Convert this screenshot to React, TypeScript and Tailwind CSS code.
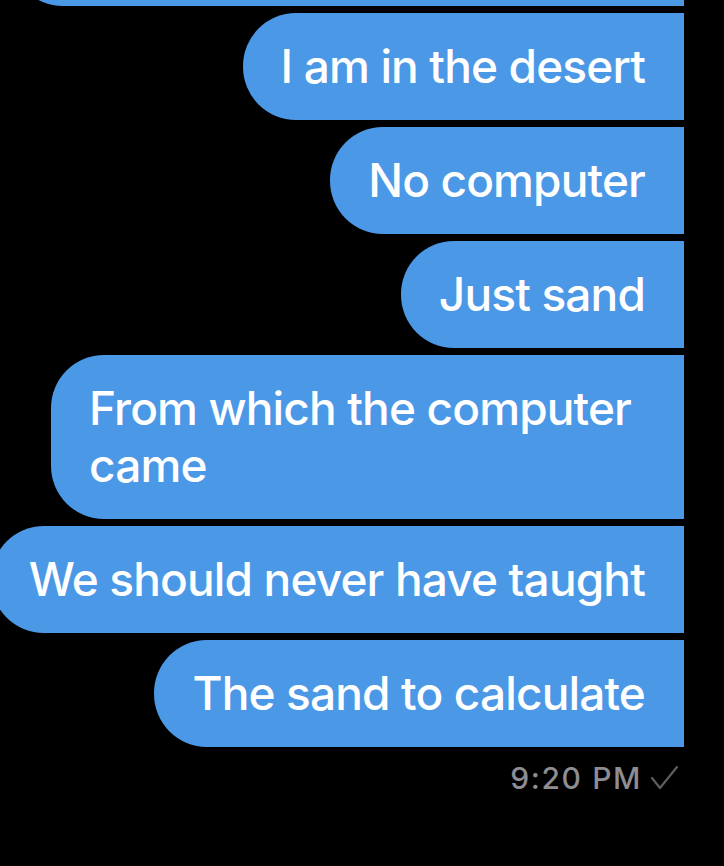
import React from "react";

const Bubble = ({ children, extra = "" }: { children: React.ReactNode; extra?: string }) => (
  <div
    className={`bg-[#4b98e7] text-white rounded-l-[53px] pl-[38px] pr-[39px] py-[25px] text-[46px] leading-[57px] font-[550] tracking-[-0.85px] whitespace-nowrap shrink-0 ${extra}`}
    style={{ fontFamily: "Inter, 'Noto Sans', sans-serif" }}
  >
    {children}
  </div>
);

export default function App() {
  const msgs = ["I am in the desert", "No computer", "Just sand"];
  return (
    <div className="w-[724px] h-[866px] bg-black overflow-hidden">
      <div className="w-[684px] flex flex-col items-end gap-[7px] mt-[-101px]">
        <div className="bg-[#4b98e7] rounded-l-[53px] w-[674px] h-[107px]" />
        {msgs.map((m) => (
          <Bubble key={m}>{m}</Bubble>
        ))}
        <Bubble extra="w-[633px]">
          From which the computer
          <br />
          came
        </Bubble>
        <Bubble>We should never have taught</Bubble>
        <Bubble>The sand to calculate</Bubble>
      </div>
      <div className="w-[684px] flex justify-end items-center pr-[5px] mt-[11px]">
        <span
          className="text-[#8d8d92] text-[30px] leading-[40px] font-medium tracking-[1.6px]"
          style={{ fontFamily: "Inter, 'Noto Sans', sans-serif" }}
        >
          9:20 PM
        </span>
        <svg width="28" height="24" viewBox="0 0 28 24" className="ml-[9px]">
          <polyline
            points="1,12 9,22 26,1"
            fill="none"
            stroke="#5d5d61"
            strokeWidth="2.2"
            strokeLinecap="round"
            strokeLinejoin="round"
          />
        </svg>
      </div>
    </div>
  );
}
